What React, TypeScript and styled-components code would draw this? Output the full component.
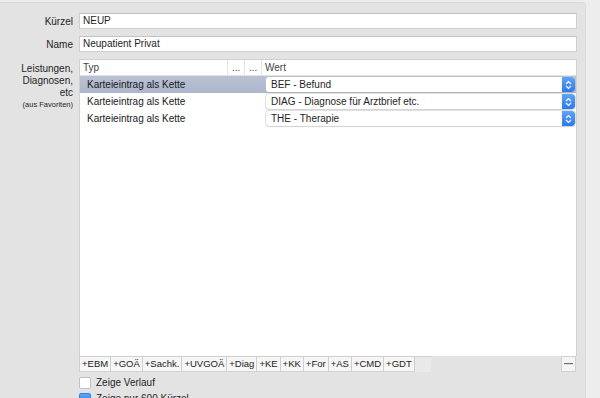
import React from 'react';
import styled, { createGlobalStyle } from 'styled-components';

const GlobalStyle = createGlobalStyle`
	html, body {
		margin: 0;
		padding: 0;
		background: #ececec;
		font-family: 'Liberation Sans', Arial, sans-serif;
		font-size: 10px;
		color: #1e1e1e;
	}
`;

const rows = [
	{ typ: 'Karteieintrag als Kette', wert: 'BEF - Befund', selected: true },
	{ typ: 'Karteieintrag als Kette', wert: 'DIAG - Diagnose für Arztbrief etc.', selected: false },
	{ typ: 'Karteieintrag als Kette', wert: 'THE - Therapie', selected: false },
];

const addButtons = ['+EBM', '+GOÄ', '+Sachk.', '+UVGOÄ', '+Diag', '+KE', '+KK', '+For', '+AS', '+CMD', '+GDT'];

const App = () => {
	return (
		<>
			<GlobalStyle />
			<Window>
				<Panel>
					<FormGrid>
						<Label>Kürzel</Label>
						<TextField>NEUP</TextField>
						<Label>Name</Label>
						<TextField>Neupatient Privat</TextField>
						<MultiLabel>
							Leistungen,
							<br />
							Diagnosen,
							<br />
							etc
							<small>(aus Favoriten)</small>
						</MultiLabel>
						<TableWrap>
							<Table>
								<HeaderRow>
									<HeadCell>Typ</HeadCell>
									<HeadCell $narrow>...</HeadCell>
									<HeadCell $narrow>...</HeadCell>
									<HeadCell>Wert</HeadCell>
								</HeaderRow>
								{rows.map((row, i) => (
									<Row key={i} $selected={row.selected}>
										<TypCell>{row.typ}</TypCell>
										<Popup>
											<span>{row.wert}</span>
											<Stepper>
												<svg width='7' height='10' viewBox='0 0 7 10'>
													<path d='M1 4 L3.5 1.5 L6 4 M1 6 L3.5 8.5 L6 6' fill='none' stroke='#fff' strokeWidth='1.1' />
												</svg>
											</Stepper>
										</Popup>
									</Row>
								))}
							</Table>
							<BottomBar>
								<ButtonGroup>
									{addButtons.map(b => (
										<SmallButton key={b}>{b}</SmallButton>
									))}
									<BarFill />
								</ButtonGroup>
								<MinusButton>
									<svg width='9' height='2' viewBox='0 0 9 2'>
										<rect width='9' height='1.2' fill='#6e6e6e' />
									</svg>
								</MinusButton>
							</BottomBar>
							<CheckRow>
								<Checkbox />
								<span>Zeige Verlauf</span>
							</CheckRow>
							<CheckRow>
								<Checkbox $checked />
								<span>Zeige nur 600 Kürzel</span>
							</CheckRow>
						</TableWrap>
					</FormGrid>
				</Panel>
			</Window>
		</>
	);
};

export default App;

const Window = styled.div`
	width: 600px;
	height: 398px;
	overflow: hidden;
	display: flex;
	padding-top: 2px;
	box-sizing: border-box;
	background: #ededed;
`;

const Panel = styled.div`
	width: 586px;
	height: 420px;
	background: #e3e3e3;
	border-top: 1px solid #d9d9d9;
	border-right: 1px solid #dadada;
	border-radius: 0 4px 0 0;
	box-sizing: border-box;
	padding: 10px 8px 0 0;
`;

const FormGrid = styled.div`
	display: grid;
	grid-template-columns: 73px 1fr;
	column-gap: 6px;
	row-gap: 7px;
	align-items: center;
`;

const Label = styled.div`
	text-align: right;
	font-size: 10px;
`;

const MultiLabel = styled.div`
	align-self: start;
	text-align: right;
	font-size: 10px;
	line-height: 12px;
	padding-top: 4px;

	small {
		display: block;
		font-size: 7.5px;
		line-height: 12px;
	}
`;

const TextField = styled.div`
	height: 16px;
	box-sizing: border-box;
	background: #fff;
	border: 1px solid #cfcfcf;
	border-top-color: #c2c2c2;
	padding: 0 3px;
	font-size: 10px;
	line-height: 14px;
`;

const TableWrap = styled.div`
	display: flex;
	flex-direction: column;
`;

const Table = styled.div`
	height: 297px;
	background: #fff;
	border: 1px solid #d0d0d0;
	border-bottom: none;
	box-sizing: border-box;
`;

const HeaderRow = styled.div`
	display: grid;
	grid-template-columns: 148px 17px 17px 1fr;
	height: 16px;
	border-bottom: 1px solid #e2e2e2;
	box-sizing: border-box;
`;

const HeadCell = styled.div<{ $narrow?: boolean }>`
	font-size: 10px;
	line-height: 15px;
	color: #444;
	padding-left: ${props => (props.$narrow ? '4px' : '3px')};
	border-right: 1px solid #e4e4e4;
	&:last-child {
		border-right: none;
	}
`;

const Row = styled.div<{ $selected?: boolean }>`
	display: grid;
	grid-template-columns: 186px 1fr;
	align-items: center;
	height: 17px;
	background: ${props => (props.$selected ? 'linear-gradient(#b9c1d4, #adb6cb)' : 'transparent')};
`;

const TypCell = styled.div`
	padding-left: 7px;
	font-size: 10px;
	color: #1a1a1a;
`;

const Popup = styled.div`
	display: flex;
	align-items: center;
	justify-content: space-between;
	height: 15px;
	margin-right: 1px;
	background: #fff;
	border-radius: 3px;
	box-shadow: 0 0 0 0.5px #c4c4c4, 0 1px 1px rgba(0, 0, 0, 0.12);
	font-size: 10px;
	overflow: hidden;

	span {
		padding-left: 5px;
	}
`;

const Stepper = styled.div`
	display: flex;
	align-items: center;
	justify-content: center;
	width: 13px;
	height: 15px;
	background: linear-gradient(#5ea4f7, #2c79ec);
	border-radius: 0 3px 3px 0;
`;

const BottomBar = styled.div`
	display: flex;
	justify-content: space-between;
	align-items: flex-start;
	height: 17px;
`;

const ButtonGroup = styled.div`
	display: flex;
	height: 15px;
	border-top: 1px solid #cfcfcf;
`;

const SmallButton = styled.div`
	padding: 0 2px;
	background: #f6f6f6;
	border-right: 1px solid #cfcfcf;
	border-bottom: 1px solid #d4d4d4;
	font-size: 9.5px;
	line-height: 14px;
	color: #222;
	&:first-child {
		border-left: 1px solid #cfcfcf;
	}
`;

const BarFill = styled.div`
	width: 16px;
	background: #e9e9e9;
`;

const MinusButton = styled.div`
	display: flex;
	align-items: center;
	justify-content: center;
	width: 15px;
	height: 16px;
	margin-right: 1px;
	background: #f4f4f4;
	border: 1px solid #d0d0d0;
	box-sizing: border-box;
`;

const CheckRow = styled.label`
	display: flex;
	align-items: center;
	gap: 5px;
	height: 13px;
	margin-top: 3px;
	font-size: 10px;
	color: #1e1e1e;
`;

const Checkbox = styled.span<{ $checked?: boolean }>`
	display: inline-block;
	width: 12px;
	height: 12px;
	border-radius: 2px;
	box-sizing: border-box;
	border: 1px solid ${props => (props.$checked ? '#2f7de9' : '#c2c2c2')};
	background: ${props => (props.$checked ? 'linear-gradient(#5ea4f7, #2c79ec)' : '#fff')};
`;
